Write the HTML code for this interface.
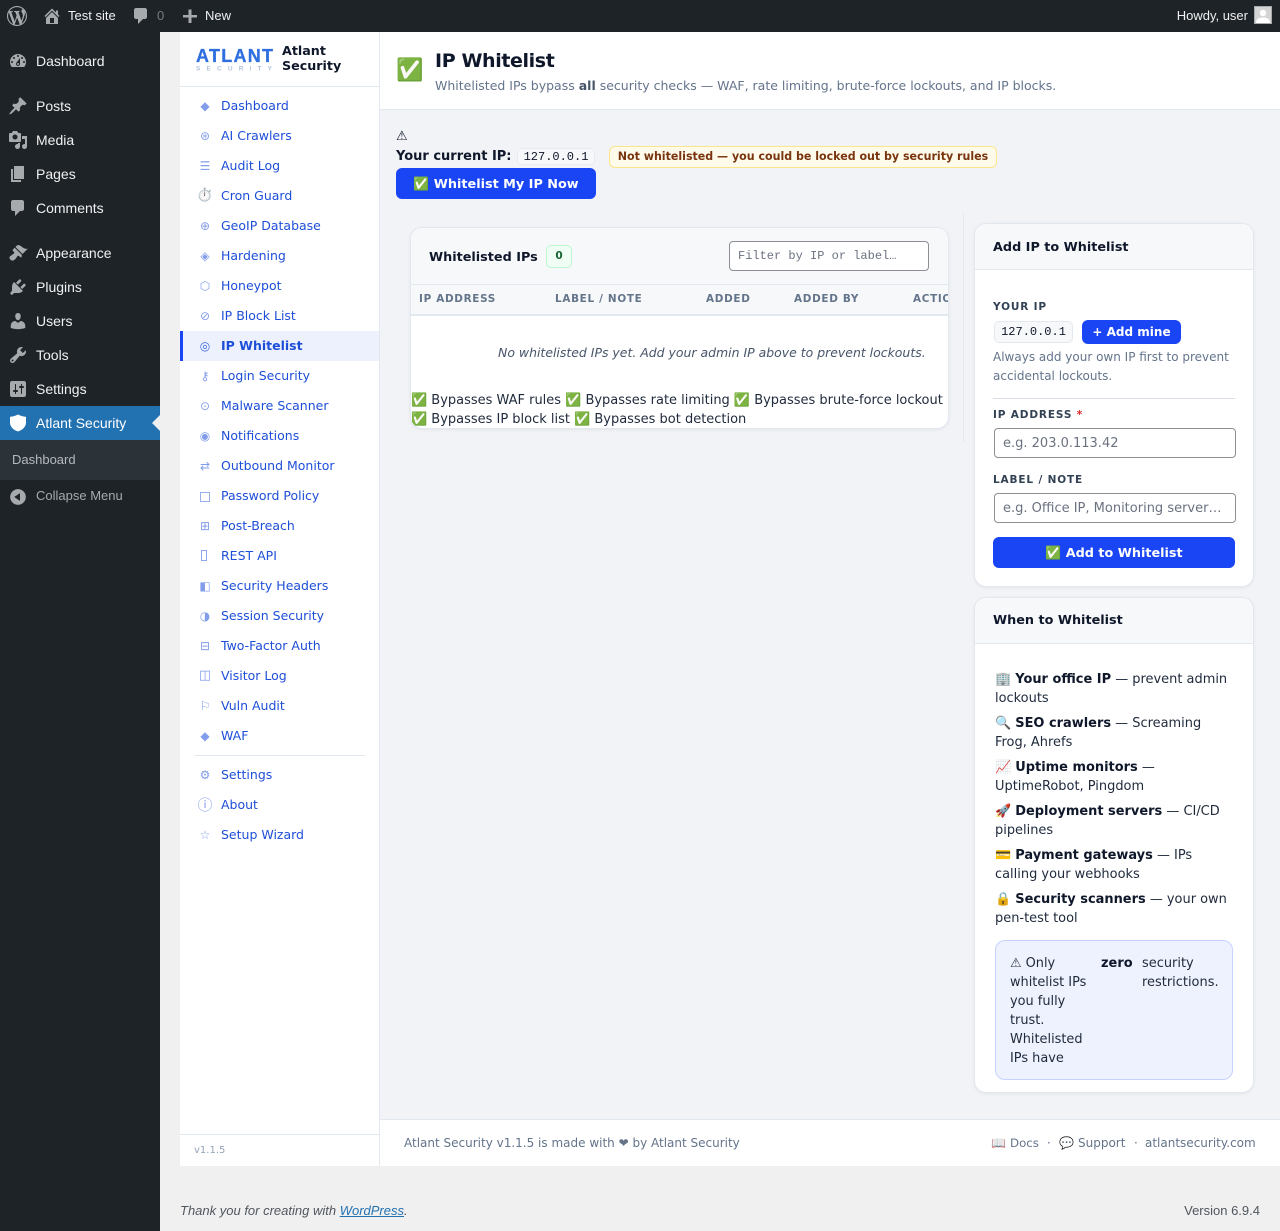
<!DOCTYPE html>
<html lang="en"><head><meta charset="utf-8"><title>IP Whitelist</title>
<style>
*{box-sizing:border-box}
html,body{margin:0;padding:0}
body{position:relative;width:1280px;height:1231px;overflow:hidden;background:#f0f0f1;font-family:"DejaVu Sans","Noto Color Emoji",sans-serif;color:#0f172a}
.a{position:absolute}
.t{position:absolute;white-space:nowrap;line-height:20px}
.w{font-family:"Liberation Sans",sans-serif}
.bar{left:0;top:0;width:1280px;height:32px;background:#1d2327}
.bt{font:13px/20px "Liberation Sans",sans-serif;color:#f0f0f1}
.side{left:0;top:32px;width:160px;height:1199px;background:#1d2327}
.m{font:14px/20px "Liberation Sans",sans-serif;color:#f0f0f1;left:36px}
svg.i{position:absolute;width:20px;height:20px;fill:#a7aaad}
.n{font-size:12.5px;color:#1d4ed8;left:221px}
.g{position:absolute;left:195px;width:20px;text-align:center;font-size:12px;line-height:20px;color:#1d4ed8;opacity:.55;white-space:nowrap}
.card{background:#fff;border:1px solid #e2e8f0;border-radius:12px;box-shadow:0 1px 3px rgba(15,23,42,.06)}
.ch{background:#f7f8fa;border-bottom:1px solid #e2e8f0;border-radius:12px 12px 0 0}
.th{font-size:10.4px;font-weight:700;letter-spacing:.7px;color:#64748b}
.lb{font-size:10.5px;font-weight:700;letter-spacing:.85px;color:#334155}
.inp{background:#fff;border:1px solid #8c8f94;border-radius:4px;height:30px}
.ph{color:#6b7280;font-size:13px}
.btn{background:#1a45f5;border-radius:6px;color:#fff;font-weight:700;font-size:12.8px;text-align:center}
.li{font-size:12.96px;color:#1e293b;left:995px}
.li b{color:#0f172a}
.nt{font-size:12.96px;color:#1e293b}
.f{font-size:12px;color:#64748b}
</style></head><body>

<div class="a bar"></div>
<svg class="i" style="left:7px;top:6px;fill:#a7aaad" viewBox="0 0 20 20"><path d="M20 10c0-5.510-4.490-10-10-10C4.480 0 0 4.490 0 10c0 5.520 4.480 10 10 10 5.510 0 10-4.480 10-10zM7.780 15.370L4.370 6.220c.55-.02 1.170-.08 1.170-.08.5-.06.44-1.130-.06-1.110 0 0-1.450.11-2.370.11-.18 0-.37 0-.58-.01C4.120 2.690 6.870 1.110 10 1.110c2.330 0 4.450.87 6.050 2.340-.68-.11-1.650.39-1.650 1.580 0 .74.45 1.360.9 2.100.35.61.55 1.360.55 2.460 0 1.490-1.400 5-1.400 5l-3.030-8.370c.54-.02.82-.17.82-.17.5-.05.44-1.250-.06-1.220 0 0-1.440.12-2.380.12-.87 0-2.330-.12-2.330-.12-.5-.03-.56 1.200-.06 1.220l.92.08 1.260 3.410zM17.410 10c.24-.64.74-1.870.43-4.250.7 1.290 1.050 2.710 1.050 4.250 0 3.290-1.730 6.240-4.400 7.780.97-2.590 1.940-5.200 2.920-7.780zM6.100 18.090C3.120 16.650 1.110 13.530 1.110 10c0-1.300.23-2.480.72-3.590C3.250 10.300 4.670 14.200 6.100 18.090zm4.030-6.630l2.580 6.980c-.86.29-1.760.45-2.710.45-.79 0-1.570-.11-2.290-.33.81-2.380 1.620-4.740 2.420-7.100z"/></svg>
<svg class="i" style="left:42px;top:6px" viewBox="0 0 20 20"><path d="M16 8.500l1.530 1.530-1.060 1.060L10 4.620l-6.470 6.470-1.060-1.060L10 2.500l4 4v-2h2v4zm-6-2.460l6 5.990V18H4v-5.970zM12 17v-5H8v5h4z"/></svg>
<div class="t bt" style="left:68px;top:6px">Test site</div>
<svg class="i" style="left:131px;top:6px" viewBox="0 0 20 20"><path d="M5 2h9c1.100 0 2 .9 2 2v7c0 1.100-.9 2-2 2h-2l-5 5v-5H5c-1.100 0-2-.9-2-2V4c0-1.100.9-2 2-2z"/></svg>
<div class="t bt" style="left:157px;top:6px;color:#787c82">0</div>
<svg class="i" style="left:180px;top:6px" viewBox="0 0 20 20"><path d="M17 9v2.500h-5.500V17h-3v-5.500H3V9h5.500V3.500h3V9z"/></svg>
<div class="t bt" style="left:205px;top:6px">New</div>
<div class="t bt" style="right:32px;top:6px">Howdy, user</div>
<div class="a" style="left:1254px;top:6px;width:18px;height:18px;background:#d4d4d4;border:1px solid #a7aaad;overflow:hidden"><svg width="16" height="16" viewBox="0 0 16 16" style="display:block"><circle cx="8" cy="6" r="3.200" fill="#fff"/><path d="M1 16c0-4 3-5.500 7-5.500s7 1.500 7 5.500z" fill="#fff"/></svg></div>

<div class="a side"></div>
<svg class="i" style="left:8px;top:51px" viewBox="0 0 20 20"><path d="M3.760 16h12.480c1.100-1.370 1.760-3.110 1.760-5 0-4.420-3.580-8-8-8s-8 3.580-8 8c0 1.890.66 3.630 1.760 5zM10 4c.55 0 1 .45 1 1s-.45 1-1 1-1-.45-1-1 .45-1 1-1zM6 6c.55 0 1 .45 1 1s-.45 1-1 1-1-.45-1-1 .45-1 1-1zm8 0c.55 0 1 .45 1 1s-.45 1-1 1-1-.45-1-1 .45-1 1-1zm-5.370 5.550L12 7v6c0 1.100-.9 2-2 2s-2-.9-2-2c0-.57.24-1.080.63-1.450zM4 10c.55 0 1 .45 1 1s-.45 1-1 1-1-.45-1-1 .45-1 1-1zm12 0c.55 0 1 .45 1 1s-.45 1-1 1-1-.45-1-1 .45-1 1-1zm-5 3c0-.55-.45-1-1-1s-1 .45-1 1 .45 1 1 1 1-.45 1-1z"/></svg>
<div class="t m" style="top:51px">Dashboard</div>
<svg class="i" style="left:8px;top:96px" viewBox="0 0 20 20"><path d="M10.440 3.020l1.820-1.820 6.360 6.350-1.830 1.820c-1.050-.68-2.480-.57-3.410.36l-.75.75c-.92.93-1.040 2.350-.35 3.410l-1.830 1.820-2.410-2.410-2.800 2.790c-.42.42-3.380 2.710-3.800 2.290s1.860-3.390 2.280-3.810l2.790-2.790L4.100 9.360l1.830-1.820c1.050.69 2.480.57 3.400-.36l.75-.75c.93-.92 1.050-2.350.36-3.410z"/></svg>
<div class="t m" style="top:96px">Posts</div>
<svg class="i" style="left:8px;top:130px" viewBox="0 0 20 20"><path d="M13 11V4c0-.55-.45-1-1-1h-1.670L9 1H5L3.670 3H2c-.55 0-1 .45-1 1v7c0 .55.45 1 1 1h10c.55 0 1-.45 1-1zM7 4.500c1.380 0 2.500 1.120 2.500 2.500S8.380 9.500 7 9.500 4.500 8.380 4.500 7 5.620 4.500 7 4.500zM14 6h5v10.500c0 1.380-1.120 2.500-2.500 2.500S14 17.880 14 16.500s1.120-2.500 2.500-2.500c.17 0 .34.02.5.05V9h-3V6zm-4 8.050V13h2v3.500c0 1.380-1.120 2.500-2.500 2.500S7 17.880 7 16.500 8.120 14 9.500 14c.17 0 .34.02.5.05z"/></svg>
<div class="t m" style="top:130px">Media</div>
<svg class="i" style="left:8px;top:164px" viewBox="0 0 20 20"><path d="M6 15V2h10v13H6zm-1 1h8v2H3V5h2v11z"/></svg>
<div class="t m" style="top:164px">Pages</div>
<svg class="i" style="left:8px;top:198px" viewBox="0 0 20 20"><path d="M5 2h9c1.100 0 2 .9 2 2v7c0 1.100-.9 2-2 2h-2l-5 5v-5H5c-1.100 0-2-.9-2-2V4c0-1.100.9-2 2-2z"/></svg>
<div class="t m" style="top:198px">Comments</div>
<svg class="i" style="left:8px;top:243px" viewBox="0 0 20 20"><path d="M14.480 11.060L7.410 3.990l1.500-1.500c.5-.56 2.300-.47 3.510.32 1.210.8 1.430 1.280 2.910 2.100 1.180.64 2.450 1.260 4.450.85zm-.71.71L6.700 4.700 4.930 6.470c-.39.39-.39 1.020 0 1.410l1.060 1.060c.39.39.39 1.030 0 1.420-.6.6-1.430 1.110-2.210 1.690-.35.26-.7.53-1.010.84C1.430 13.230.79 15.050 2.380 16.640s3.410.95 4.770-.41c.31-.31.58-.66.84-1.010.58-.78 1.090-1.610 1.690-2.210.39-.39 1.030-.39 1.420 0l1.060 1.060c.39.39 1.020.39 1.410 0z"/></svg>
<div class="t m" style="top:243px">Appearance</div>
<svg class="i" style="left:8px;top:277px" viewBox="0 0 20 20"><path d="M13.110 4.360L9.870 7.600 8 5.730l3.240-3.240c.35-.34 1.050-.2 1.560.32.52.51.66 1.210.31 1.550zm-8 1.770l.91-1.120 9.010 9.010-1.190.84c-.71.71-2.630 1.160-3.820 1.160H6.140L4.900 17.260c-.59.59-1.540.59-2.120 0-.59-.58-.59-1.530 0-2.120l1.240-1.240v-3.880c0-1.130.4-3.190 1.090-3.890zm7.260 3.970l3.240-3.240c.34-.35 1.040-.21 1.550.31.52.51.66 1.210.31 1.550l-3.240 3.250z"/></svg>
<div class="t m" style="top:277px">Plugins</div>
<svg class="i" style="left:8px;top:311px" viewBox="0 0 20 20"><path d="M10 9.250c-2.270 0-2.730-3.440-2.730-3.440C7 4.020 7.820 2 9.970 2c2.160 0 2.980 2.020 2.710 3.810 0 0-.41 3.440-2.680 3.440zm0 2.570L12.720 10c2.390 0 4.520 2.330 4.520 4.530v2.490s-3.650 1.130-7.240 1.130c-3.650 0-7.240-1.130-7.240-1.130v-2.490c0-2.250 1.940-4.480 4.470-4.480z"/></svg>
<div class="t m" style="top:311px">Users</div>
<svg class="i" style="left:8px;top:345px" viewBox="0 0 20 20"><path d="M16.680 9.770c-1.340 1.340-3.300 1.670-4.950.99l-5.410 6.520c-.99.99-2.590.99-3.580 0s-.99-2.590 0-3.570l6.520-5.420c-.68-1.650-.35-3.610.99-4.950 1.280-1.280 3.120-1.620 4.720-1.060l-2.890 2.890 2.820 2.820 2.860-2.870c.53 1.580.18 3.390-1.080 4.650zM3.810 16.210c.4.39 1.040.39 1.430 0 .4-.4.4-1.040 0-1.430-.39-.4-1.030-.4-1.430 0-.39.39-.39 1.030 0 1.430z"/></svg>
<div class="t m" style="top:345px">Tools</div>
<svg class="i" style="left:8px;top:379px" viewBox="0 0 20 20"><path d="M18 16V4c0-1.100-.9-2-2-2H4c-1.100 0-2 .9-2 2v12c0 1.100.9 2 2 2h12c1.100 0 2-.9 2-2zM8 11h1c.55 0 1 .45 1 1s-.45 1-1 1H8v1.500c0 .28-.22.5-.5.5s-.5-.22-.5-.5V13H6c-.55 0-1-.45-1-1s.45-1 1-1h1V5.500c0-.28.22-.5.5-.5s.5.22.5.5V11zm5-2h-1c-.55 0-1-.45-1-1s.45-1 1-1h1V5.500c0-.28.22-.5.5-.5s.5.22.5.5V7h1c.55 0 1 .45 1 1s-.45 1-1 1h-1v5.500c0 .28-.22.5-.5.5s-.5-.22-.5-.5V9z"/></svg>
<div class="t m" style="top:379px">Settings</div>
<div class="a" style="left:0;top:406px;width:160px;height:34px;background:#2271b1"></div>
<svg class="i" style="left:8px;top:413px;fill:#fff" viewBox="0 0 20 20"><path d="M10 1.500c2.500 1.300 5 2 7.500 2.200.3 0 .5.2.5.5v5.300c0 4-3 7.300-8 9-5-1.700-8-5-8-9V4.200c0-.3.2-.5.5-.5C5 3.500 7.500 2.800 10 1.500z"/></svg>
<div class="t m" style="top:413px;color:#fff">Atlant Security</div>
<div class="a" style="left:152px;top:415px;width:0;height:0;border:8px solid transparent;border-left:0;border-right-color:#f0f0f1"></div>
<div class="a" style="left:0;top:440px;width:160px;height:40px;background:#2c3338"></div>
<div class="t w" style="left:12px;top:450px;font-size:13px;color:#b4b9be">Dashboard</div>
<svg class="i" style="left:8px;top:487px" viewBox="0 0 20 20"><path d="M10 2.160c4.330 0 7.840 3.510 7.840 7.840s-3.510 7.840-7.840 7.840S2.160 14.330 2.160 10 5.710 2.160 10 2.160zm2 11.720V6.120L6.180 9.970z"/></svg>
<div class="t w" style="left:36px;top:486px;font-size:13px;color:#a7aaad">Collapse Menu</div>

<div class="a" style="left:180px;top:32px;width:200px;height:1134px;background:#fff;border-right:1px solid #e2e8f0"></div>
<div class="a" style="left:180px;top:86px;width:199px;height:1px;background:#e2e8f0"></div>
<div class="a" style="left:180px;top:1134px;width:199px;height:1px;background:#e2e8f0"></div>
<svg class="a" style="left:195px;top:46px" width="80" height="28" viewBox="0 0 80 28"><text x="1" y="16" textLength="77" lengthAdjust="spacing" font-family="Liberation Sans" font-weight="700" font-size="18" fill="#2f6fe0" stroke="#2f6fe0" stroke-width=".3">ATLANT</text><text x="1" y="24.500" textLength="76" font-family="Liberation Sans" font-weight="700" font-size="6.500" fill="#b4c4dd">SECURITY</text></svg>
<div class="a" style="left:282px;top:43px;font-size:12.700px;line-height:15.400px;font-weight:700;color:#0f172a">Atlant<br>Security</div>

<div class="g" style="top:96px">◆</div><div class="t n" style="top:96px">Dashboard</div>
<div class="g" style="top:126px">⊛</div><div class="t n" style="top:126px">AI Crawlers</div>
<div class="g" style="top:156px">☰</div><div class="t n" style="top:156px">Audit Log</div>
<div class="g" style="top:186px;font-size:13px;color:#555;opacity:.9;font-weight:700">⏱️</div><div class="t n" style="top:186px">Cron Guard</div>
<div class="g" style="top:216px">⊕</div><div class="t n" style="top:216px">GeoIP Database</div>
<div class="g" style="top:246px">◈</div><div class="t n" style="top:246px">Hardening</div>
<div class="g" style="top:276px">⬡</div><div class="t n" style="top:276px">Honeypot</div>
<div class="g" style="top:306px">⊘</div><div class="t n" style="top:306px">IP Block List</div>
<div class="a" style="left:180px;top:331px;width:199px;height:30px;background:#edf1fe;border-left:3px solid #1a45f5"></div>
<div class="g" style="top:336px;opacity:.85">◎</div><div class="t n" style="top:336px;font-weight:700">IP Whitelist</div>
<div class="g" style="top:366px">⚷</div><div class="t n" style="top:366px">Login Security</div>
<div class="g" style="top:396px">⊙</div><div class="t n" style="top:396px">Malware Scanner</div>
<div class="g" style="top:426px">◉</div><div class="t n" style="top:426px">Notifications</div>
<div class="g" style="top:456px">⇄</div><div class="t n" style="top:456px">Outbound Monitor</div>
<div class="a" style="left:200px;top:492px;width:9.500px;height:10px;border:1px solid #1d4ed8;opacity:.45"></div><div class="t n" style="top:486px">Password Policy</div>
<div class="g" style="top:516px">⊞</div><div class="t n" style="top:516px">Post-Breach</div>
<div class="a" style="left:201px;top:550px;width:6px;height:11px;border:1px solid #1d4ed8;opacity:.5"></div><div class="t n" style="top:546px">REST API</div>
<div class="g" style="top:576px">◧</div><div class="t n" style="top:576px">Security Headers</div>
<div class="g" style="top:606px">◑</div><div class="t n" style="top:606px">Session Security</div>
<div class="g" style="top:636px">⊟</div><div class="t n" style="top:636px">Two-Factor Auth</div>
<div class="g" style="top:666px;font-size:13px">◫</div><div class="t n" style="top:666px">Visitor Log</div>
<div class="g" style="top:696px">⚐</div><div class="t n" style="top:696px">Vuln Audit</div>
<div class="g" style="top:726px">◆</div><div class="t n" style="top:726px">WAF</div>
<div class="a" style="left:194px;top:755px;width:171px;height:1px;background:#e2e8f0"></div>
<div class="g" style="top:765px">⚙</div><div class="t n" style="top:765px">Settings</div>
<div class="g" style="top:795px;font-size:15px">ⓘ</div><div class="t n" style="top:795px">About</div>
<div class="g" style="top:825px">☆</div><div class="t n" style="top:825px">Setup Wizard</div>
<div class="t" style="left:194px;top:1141px;font-size:10px;color:#94a3b8">v1.1.5</div>

<div class="a" style="left:380px;top:32px;width:900px;height:1134px;background:#f1f3f6"></div>
<div class="a" style="left:380px;top:32px;width:900px;height:78px;background:#fff;border-bottom:1px solid #e2e8f0"></div>
<div class="t" style="left:396px;top:60px;font-size:22px;line-height:22px">✅</div>
<div class="t" style="left:435px;top:49px;font-size:19px;line-height:24px;font-weight:700;letter-spacing:-.38px">IP Whitelist</div>
<div class="t" style="left:435px;top:76px;font-size:12.500px;color:#64748b">Whitelisted IPs bypass <b style="color:#475569">all</b> security checks — WAF, rate limiting, brute-force lockouts, and IP blocks.</div>

<div class="t" style="left:396px;top:127px;font-size:13px">⚠</div>
<div class="t" style="left:396px;top:146px;font-size:13px;line-height:21px;font-weight:700">Your current IP:</div>
<div class="a" style="left:517px;top:148px;width:78px;height:17px;background:#f7f8fa;border:1px solid #e8ecf2;border-radius:5px;font:12px/16px 'Liberation Mono',monospace;text-align:center">127.0.0.1</div>
<div class="a" style="left:609px;top:146px;width:388px;height:22px;background:#fffbeb;border:1px solid #fde68a;border-radius:6px;font-size:11.050px;line-height:20px;font-weight:700;color:#78350f;text-align:center;white-space:nowrap">Not whitelisted — you could be locked out by security rules</div>
<div class="a btn" style="left:396px;top:168px;width:200px;height:31px;line-height:33px">✅ Whitelist My IP Now</div>

<div class="a" style="left:963px;top:213px;width:1px;height:229px;background:#e2e8f0"></div>
<div class="a card" style="left:410px;top:227px;width:539px;height:202px;overflow:hidden">
<div class="a ch" style="left:0;top:0;width:539px;height:57px;border-radius:0"></div>
<div class="a" style="left:0;top:57px;width:539px;height:31px;background:#f7f8fa;border-bottom:2px solid #e2e8f0"></div>
<div class="t" style="left:18px;top:19px;font-size:12.800px;line-height:22px;font-weight:700">Whitelisted IPs</div>
<div class="a" style="left:135px;top:17px;width:26px;height:23px;background:#f0fdf4;border:1px solid #bbf7d0;border-radius:5px;font-size:10.500px;line-height:21px;font-weight:700;text-align:center;color:#166534">0</div>
<div class="a inp" style="left:318px;top:13px;width:200px"></div>
<div class="t" style="left:327px;top:18px;font:12px/20px 'Liberation Mono',monospace;color:#6b7280">Filter by IP or label…</div>
<div class="t th" style="left:8px;top:61px">IP ADDRESS</div>
<div class="t th" style="left:144px;top:61px">LABEL / NOTE</div>
<div class="t th" style="left:295px;top:61px">ADDED</div>
<div class="t th" style="left:383px;top:61px">ADDED BY</div>
<div class="t th" style="left:502px;top:61px">ACTIONS</div>
<div class="t" style="left:87px;top:115px;font-size:12.460px;font-style:italic;color:#475569">No whitelisted IPs yet. Add your admin IP above to prevent lockouts.</div>
<div class="t" style="left:0;top:163px;font-size:12.995px;color:#1e293b">✅ Bypasses WAF rules ✅ Bypasses rate limiting ✅ Bypasses brute-force lockout</div>
<div class="t" style="left:0;top:182px;font-size:12.995px;color:#1e293b">✅ Bypasses IP block list ✅ Bypasses bot detection</div>
</div>

<div class="a card" style="left:974px;top:223px;width:280px;height:364px"></div>
<div class="a ch" style="left:975px;top:224px;width:278px;height:46px"></div>
<div class="t" style="left:993px;top:239px;font-size:12.800px;line-height:18px;font-weight:700">Add IP to Whitelist</div>
<div class="t lb" style="left:993px;top:297px;color:#334155">YOUR IP</div>
<div class="a" style="left:994px;top:321px;width:79px;height:22px;background:#f7f8fa;border:1px solid #e2e8f0;border-radius:5px;font:12px/20px 'Liberation Mono',monospace;text-align:center">127.0.0.1</div>
<div class="a btn" style="left:1082px;top:320px;width:99px;height:24px;line-height:24px;font-size:12px">+ Add mine</div>
<div class="a" style="left:993px;top:348px;width:245px;font-size:12px;line-height:19px;color:#64748b">Always add your own IP first to prevent accidental lockouts.</div>
<div class="a" style="left:993px;top:398px;width:242px;height:1px;background:#dcdfe6"></div>
<div class="t lb" style="left:993px;top:405px">IP ADDRESS <span style="color:#dc2626">*</span></div>
<div class="a inp" style="left:994px;top:428px;width:242px"></div>
<div class="t ph" style="left:1003px;top:434px">e.g. 203.0.113.42</div>
<div class="t lb" style="left:993px;top:470px">LABEL / NOTE</div>
<div class="a inp" style="left:994px;top:493px;width:242px"></div>
<div class="t ph" style="left:1003px;top:499px">e.g. Office IP, Monitoring server…</div>
<div class="a btn" style="left:993px;top:537px;width:242px;height:31px;line-height:33px">✅ Add to Whitelist</div>

<div class="a card" style="left:974px;top:597px;width:280px;height:496px"></div>
<div class="a ch" style="left:975px;top:598px;width:278px;height:46px"></div>
<div class="t" style="left:993px;top:612px;font-size:12.800px;line-height:18px;font-weight:700">When to Whitelist</div>
<div class="t li" style="top:670px">🏢 <b>Your office IP</b> — prevent admin</div><div class="t li" style="top:689px">lockouts</div>
<div class="t li" style="top:714px">🔍 <b>SEO crawlers</b> — Screaming</div><div class="t li" style="top:733px">Frog, Ahrefs</div>
<div class="t li" style="top:758px">📈 <b>Uptime monitors</b> —</div><div class="t li" style="top:777px">UptimeRobot, Pingdom</div>
<div class="t li" style="top:802px">🚀 <b>Deployment servers</b> — CI/CD</div><div class="t li" style="top:821px">pipelines</div>
<div class="t li" style="top:846px">💳 <b>Payment gateways</b> — IPs</div><div class="t li" style="top:865px">calling your webhooks</div>
<div class="t li" style="top:890px">🔒 <b>Security scanners</b> — your own</div><div class="t li" style="top:909px">pen-test tool</div>
<div class="a" style="left:995px;top:940px;width:238px;height:140px;background:#eef2fe;border:1px solid #c7d2fe;border-radius:10px"></div>
<div class="a nt" style="left:1010px;top:954px;line-height:19px;white-space:nowrap;font-size:12.900px">⚠ Only<br>whitelist IPs<br>you fully<br>trust.<br>Whitelisted<br>IPs have</div>
<div class="t nt" style="left:1101px;top:954px;line-height:19px;font-weight:700;color:#0f172a">zero</div>
<div class="a nt" style="left:1142px;top:954px;line-height:19px;white-space:nowrap">security<br>restrictions.</div>

<div class="a" style="left:380px;top:1119px;width:900px;height:47px;background:#fff;border-top:1px solid #e2e8f0"></div>
<div class="t f" style="left:404px;top:1133px">Atlant Security v1.1.5 is made with ❤ by Atlant Security</div>
<div class="t f" style="left:991px;top:1133px">📖</div><div class="t f" style="left:1010px;top:1133px;font-size:11.800px">Docs</div>
<div class="t f" style="left:1047px;top:1133px">·</div>
<div class="t f" style="left:1059px;top:1133px">💬</div><div class="t f" style="left:1078px;top:1133px">Support</div>
<div class="t f" style="left:1134px;top:1133px">·</div>
<div class="t f" style="left:1145px;top:1133px">atlantsecurity.com</div>

<div class="t w" style="left:180px;top:1201px;font-size:13px;font-style:italic;color:#50575e">Thank you for creating with <span style="color:#2271b1;text-decoration:underline">WordPress</span>.</div>
<div class="t w" style="right:20px;top:1201px;font-size:13px;color:#50575e">Version 6.9.4</div>
</body></html>
